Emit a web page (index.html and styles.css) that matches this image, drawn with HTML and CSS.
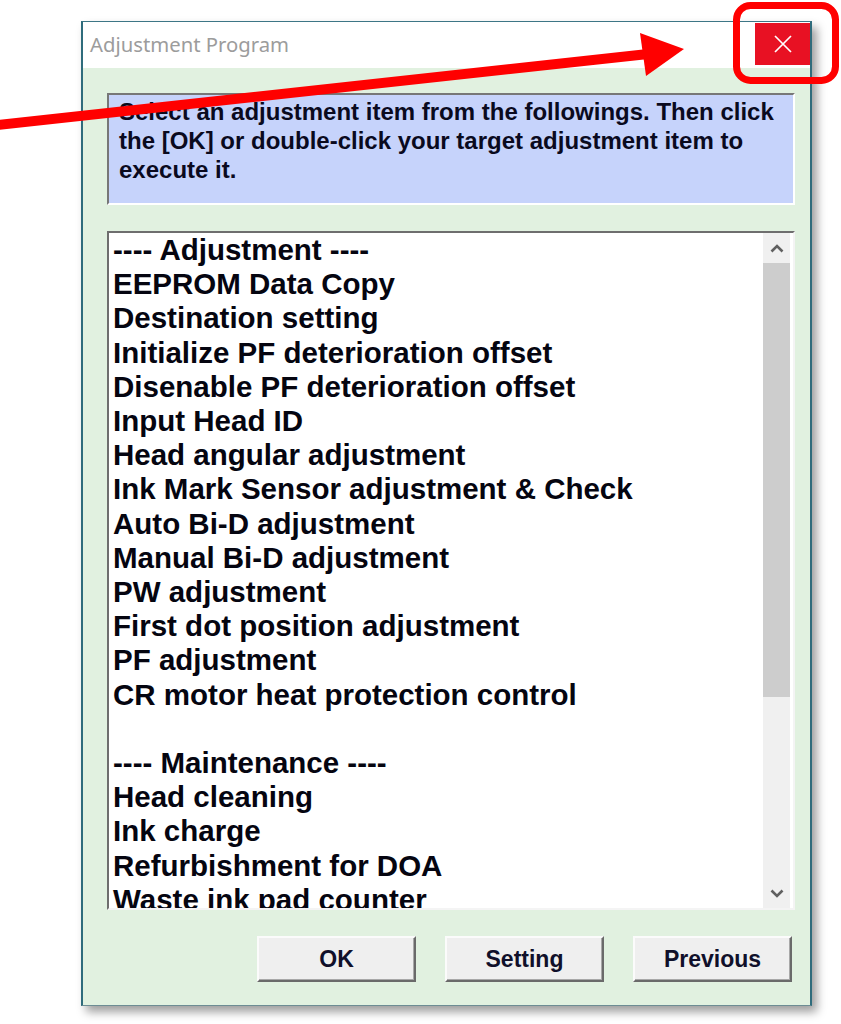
FILE: index.html
```html
<!DOCTYPE html>
<html>
<head>
<meta charset="utf-8">
<title>Adjustment Program</title>
<link rel="stylesheet" href="styles.css">
</head>
<body>
<div class="window">
  <div class="titlebar">
    <span class="title">Adjustment Program</span>
    <div class="close">
      <svg width="18" height="18" viewBox="0 0 18 18"><path d="M1 1 L17 17 M17 1 L1 17" stroke="#fff" stroke-width="1.7" fill="none"/></svg>
    </div>
  </div>
  <div class="client">
    <div class="info">Select an adjustment item from the followings. Then click the [OK] or double-click your target adjustment item to execute it.</div>
    <div class="listbox">
      <ul class="items">
        <li>---- Adjustment ----</li>
        <li>EEPROM Data Copy</li>
        <li>Destination setting</li>
        <li>Initialize PF deterioration offset</li>
        <li>Disenable PF deterioration offset</li>
        <li>Input Head ID</li>
        <li>Head angular adjustment</li>
        <li>Ink Mark Sensor adjustment &amp; Check</li>
        <li>Auto Bi-D adjustment</li>
        <li>Manual Bi-D adjustment</li>
        <li>PW adjustment</li>
        <li>First dot position adjustment</li>
        <li>PF adjustment</li>
        <li>CR motor heat protection control</li>
        <li>&nbsp;</li>
        <li>---- Maintenance ----</li>
        <li>Head cleaning</li>
        <li>Ink charge</li>
        <li>Refurbishment for DOA</li>
        <li>Waste ink pad counter</li>
      </ul>
      <div class="scrollbar">
        <div class="sb-btn">
          <svg width="14" height="9" viewBox="0 0 14 9"><path d="M1.5 7.5 L7 2 L12.5 7.5" stroke="#606060" stroke-width="2.6" fill="none"/></svg>
        </div>
        <div class="thumb"></div>
        <div class="track"></div>
        <div class="sb-btn">
          <svg width="14" height="9" viewBox="0 0 14 9"><path d="M1.5 1.5 L7 7 L12.5 1.5" stroke="#606060" stroke-width="2.6" fill="none"/></svg>
        </div>
      </div>
    </div>
    <div class="buttons">
      <button class="btn">OK</button>
      <button class="btn">Setting</button>
      <button class="btn">Previous</button>
    </div>
  </div>
</div>
<svg class="annot" width="841" height="1024" viewBox="0 0 841 1024">
  <line x1="-2" y1="125" x2="648" y2="54" stroke="#ff0000" stroke-width="10"/>
  <polygon points="640,33 684,49 646,76" fill="#ff0000"/>
  <rect x="736.5" y="5.5" width="99" height="75" rx="14" ry="14" fill="none" stroke="#ff0000" stroke-width="7"/>
</svg>
</body>
</html>
```

FILE: styles.css
```css
html, body {
  margin: 0;
  padding: 0;
}
body {
  background: #ffffff;
  width: 841px;
  height: 1024px;
  overflow: hidden;
  position: relative;
}
.window {
  margin: 21px 0 0 81px;
  width: 731px;
  height: 985px;
  box-sizing: border-box;
  border-left: 2px solid #2f6c7c;
  border-right: 2px solid #2f6c7c;
  border-top: 1px solid #3d7686;
  border-bottom: 1px solid #6d8d94;
  box-shadow: 5px 6px 9px rgba(0, 0, 0, 0.38);
  display: flex;
  flex-direction: column;
}
.titlebar {
  height: 46px;
  background: #ffffff;
  display: flex;
  align-items: flex-start;
}
.title {
  padding-left: 7px;
  line-height: 44px;
  font-family: "Noto Sans", "Open Sans", sans-serif;
  font-size: 20.3px;
  color: #9c9c9c;
}
.close {
  margin-left: auto;
  margin-top: 1px;
  width: 55px;
  height: 42px;
  background: #e81123;
  display: flex;
  align-items: center;
  justify-content: center;
}
.close svg {
  display: block;
}
.client {
  flex: 1;
  background: #e1f1e0;
  padding: 25px 15px 0 24px;
  display: flex;
  flex-direction: column;
}
.info {
  height: 112px;
  box-sizing: border-box;
  border-top: 2px solid #777777;
  border-left: 2px solid #777777;
  border-right: 2px solid #ffffff;
  border-bottom: 2px solid #ffffff;
  background: #c6d3fb;
  padding: 2px 8px 0 10px;
  font-family: "Liberation Sans", Arial, sans-serif;
  font-weight: bold;
  font-size: 24px;
  line-height: 29px;
  color: #0a0a1e;
}
.listbox {
  margin-top: 26px;
  height: 679px;
  box-sizing: border-box;
  border-top: 2px solid #6e6e6e;
  border-left: 2px solid #6e6e6e;
  border-right: 2px solid #f4f4f4;
  border-bottom: 2px solid #f4f4f4;
  background: #ffffff;
  display: flex;
}
.items {
  flex: 1;
  list-style: none;
  margin: 0;
  padding: 0 0 0 4px;
  overflow: hidden;
  font-family: "Liberation Sans", Arial, sans-serif;
  font-weight: bold;
  font-size: 29.5px;
  line-height: 34.2px;
  color: #050510;
  white-space: nowrap;
}
.scrollbar {
  width: 27px;
  margin-right: 3px;
  background: #f0f0f0;
  display: flex;
  flex-direction: column;
}
.sb-btn {
  height: 30px;
  display: flex;
  align-items: center;
  justify-content: center;
}
.thumb {
  height: 434px;
  background: #cdcdcd;
}
.track {
  flex: 1;
}
.buttons {
  margin-top: 26px;
  margin-right: 3px;
  display: flex;
  justify-content: flex-end;
  gap: 29px;
}
.btn {
  width: 159px;
  height: 46px;
  box-sizing: border-box;
  margin: 0;
  padding: 0;
  background: #efefef;
  border-top: 2px solid #fbfbfb;
  border-left: 2px solid #fbfbfb;
  border-right: 2px solid #6a6a6a;
  border-bottom: 2px solid #6a6a6a;
  box-shadow: inset -1px -1px 0 #a8a8a8;
  font-family: "Liberation Sans", Arial, sans-serif;
  font-weight: bold;
  font-size: 23px;
  color: #10102a;
}
.annot {
  position: absolute;
  left: 0;
  top: 0;
  pointer-events: none;
}
```
